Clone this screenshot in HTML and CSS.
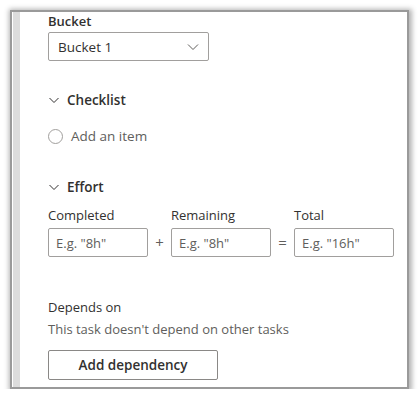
FILE: index.html
```html
<!DOCTYPE html>
<html lang="en">
<head>
    <meta charset="UTF-8">
    <meta name="viewport" content="width=device-width, initial-scale=1.0">
    <title>Task details</title>
    <link rel="stylesheet" href="styles.css">
</head>
<body>
    <div class="window">
        <div class="side-strip"></div>
        <div class="panel">
            <div class="field">
                <div class="label strong">Bucket</div>
                <div class="dropdown">
                    <span>Bucket 1</span>
                    <svg class="dropdown-chevron" width="12" height="8" viewBox="0 0 12 8"><path d="M1 1.5 L6 6.5 L11 1.5" fill="none" stroke="#605e5c" stroke-width="1"/></svg>
                </div>
            </div>

            <div class="section-head">
                <svg width="10" height="7" viewBox="0 0 10 7"><path d="M0.5 1 L5 5.5 L9.5 1" fill="none" stroke="#323130" stroke-width="1"/></svg>
                <span>Checklist</span>
            </div>
            <div class="check-item">
                <span class="circle"></span>
                <span>Add an item</span>
            </div>

            <div class="section-head effort-head">
                <svg width="10" height="7" viewBox="0 0 10 7"><path d="M0.5 1 L5 5.5 L9.5 1" fill="none" stroke="#323130" stroke-width="1"/></svg>
                <span>Effort</span>
            </div>
            <div class="effort">
                <div class="effort-col">
                    <div class="label">Completed</div>
                    <input type="text" placeholder='E.g. "8h"'>
                </div>
                <div class="op">+</div>
                <div class="effort-col">
                    <div class="label">Remaining</div>
                    <input type="text" placeholder='E.g. "8h"'>
                </div>
                <div class="op">=</div>
                <div class="effort-col">
                    <div class="label">Total</div>
                    <input type="text" placeholder='E.g. "16h"'>
                </div>
            </div>

            <div class="depends">
                <div class="label">Depends on</div>
                <div class="hint">This task doesn't depend on other tasks</div>
                <button class="dep-btn">Add dependency</button>
            </div>
        </div>
    </div>
</body>
</html>
```

FILE: styles.css
```css
body {
    margin: 0;
    background: #ffffff;
    font-family: "Open Sans", "Noto Sans", sans-serif;
    color: #323130;
}

.window {
    position: relative;
    margin: 10px 0 0 10px;
    width: 399px;
    height: 379px;
    box-sizing: border-box;
    border: 2px solid #9a9a9a;
    box-shadow: 1px 1px 5px 2px rgba(0, 0, 0, 0.3);
    display: flex;
    overflow: hidden;
    background: #fff;
}

.side-strip {
    width: 7px;
    margin-left: 1px;
    background: #dcdcdc;
    flex-shrink: 0;
}

.panel {
    padding: 0 0 0 28px;
    flex: 1;
    font-size: 13px;
}

.label {
    font-size: 13px;
    line-height: 18px;
}

.strong {
    font-weight: 600;
}

.field .label {
    margin-top: 0;
    height: 20px;
}

.dropdown {
    margin-top: 0;
    width: 161px;
    height: 29px;
    box-sizing: border-box;
    border: 1px solid #a19f9d;
    border-radius: 2px;
    display: flex;
    align-items: center;
    justify-content: space-between;
    padding: 0 9px 0 9px;
    font-size: 13.5px;
}

.section-head {
    display: flex;
    align-items: center;
    gap: 8px;
    margin-top: 29px;
    font-size: 13.5px;
    font-weight: 600;
    height: 20px;
}

.section-head svg {
    margin-left: 1px;
}

.check-item {
    display: flex;
    align-items: center;
    gap: 8px;
    margin-top: 16px;
    color: #605e5c;
    font-size: 13.5px;
    height: 20px;
}

.circle {
    width: 15px;
    height: 15px;
    box-sizing: border-box;
    border: 1px solid #a19f9d;
    border-radius: 50%;
}

.effort-head {
    margin-top: 31px;
}

.effort {
    display: flex;
    align-items: flex-end;
    margin-top: 9px;
}

.effort-col .label {
    height: 22px;
    line-height: 18px;
}

.effort input {
    width: 100px;
    height: 29px;
    box-sizing: border-box;
    border: 1px solid #a19f9d;
    border-radius: 2px;
    padding: 0 7px;
    font-family: inherit;
    font-size: 13px;
    margin: 0;
}

.effort input::placeholder {
    color: #605e5c;
}

.op {
    width: 23px;
    height: 29px;
    line-height: 29px;
    text-align: center;
    color: #605e5c;
    font-size: 15px;
}

.depends {
    margin-top: 41px;
}

.depends .label {
    height: 20px;
}

.hint {
    color: #605e5c;
    font-size: 13px;
    line-height: 22px;
}

.dep-btn {
    margin-top: 10px;
    width: 170px;
    height: 30px;
    border: 1px solid #8a8886;
    border-radius: 2px;
    background: #fff;
    font-family: inherit;
    font-size: 13.5px;
    font-weight: 600;
    color: #323130;
}
```
